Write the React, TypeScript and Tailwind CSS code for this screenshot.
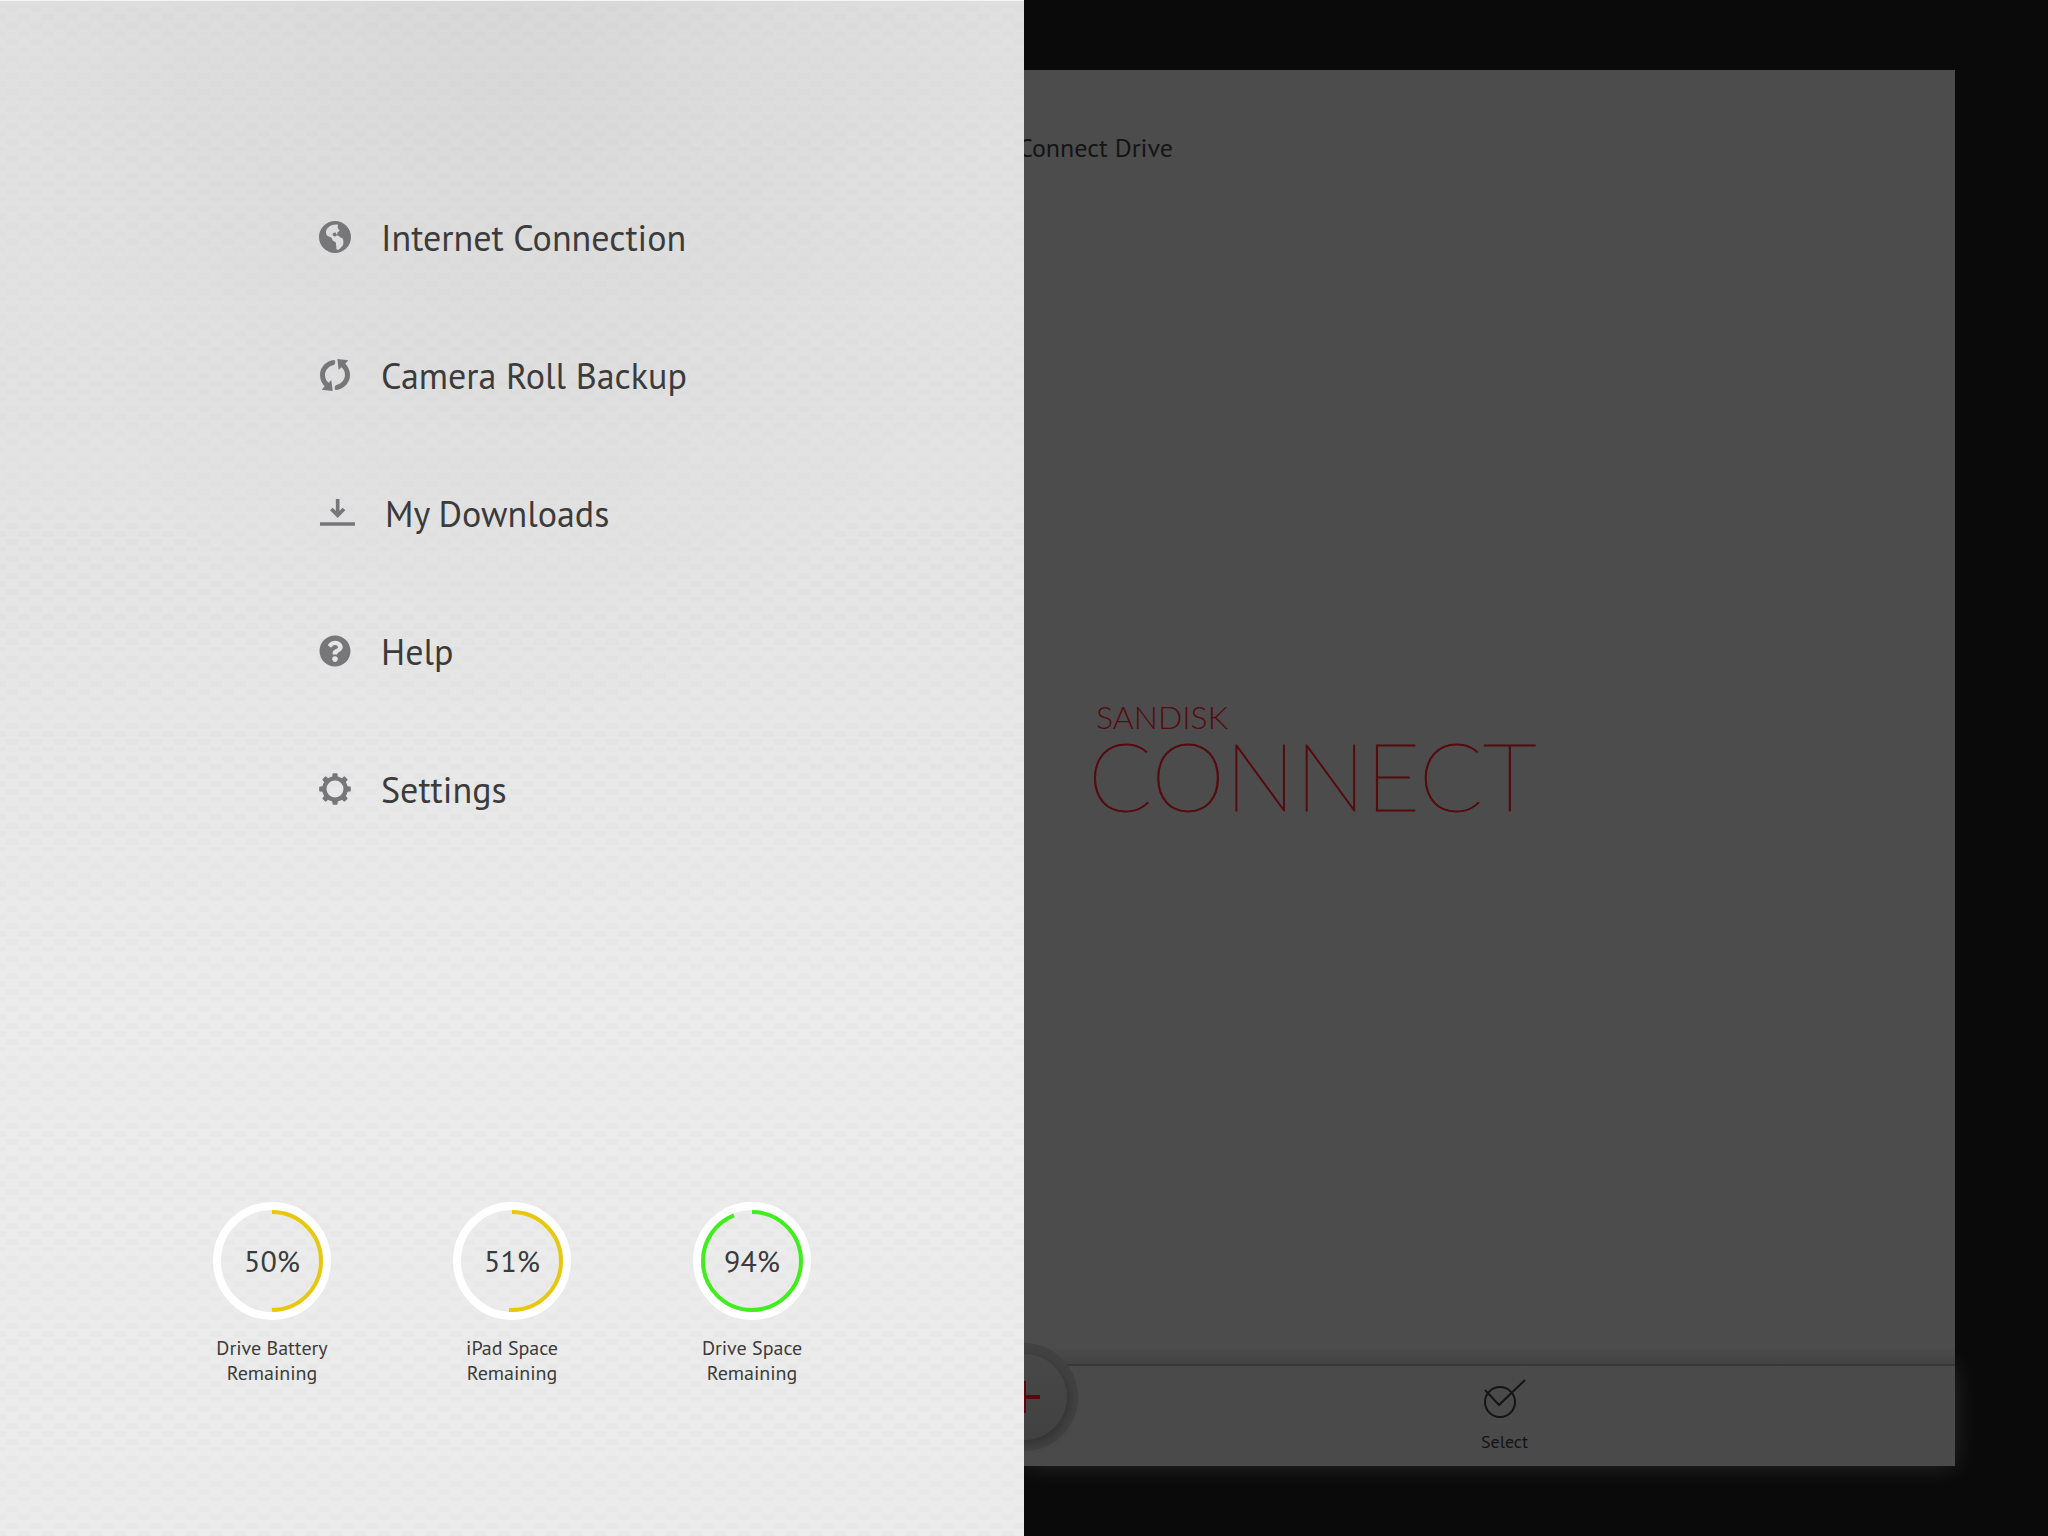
import type { ReactNode } from 'react';
import { FaQuestionCircle } from 'react-icons/fa';

interface MenuEntry {
  label: string;
  icon: ReactNode;
}

interface Gauge {
  percent: number;
  label: string;
  color: string;
}

const MENU: MenuEntry[] = [
  { label: 'Internet Connection', icon: <GlobeIcon /> },
  { label: 'Camera Roll Backup', icon: <SyncIcon /> },
  { label: 'My Downloads', icon: <DownloadIcon /> },
  { label: 'Help', icon: <FaQuestionCircle className="size-8" aria-hidden="true" /> },
  { label: 'Settings', icon: <GearIcon /> },
];

const GAUGES: Gauge[] = [
  { percent: 50, label: 'Drive Battery Remaining', color: '#e8c80f' },
  { percent: 51, label: 'iPad Space Remaining', color: '#e8c80f' },
  { percent: 94, label: 'Drive Space Remaining', color: '#3fee1c' },
];

export default function App() {
  return (
    <div className="flex min-h-screen bg-[#0a0a0a] font-['PT_Sans','Noto_Sans',sans-serif]">
      <SideMenu />
      <DriveScreen />
    </div>
  );
}

function SideMenu() {
  return (
    <aside className="relative z-10 flex w-1/2 flex-col justify-between border-t border-[#f4f4f4] bg-[#ebebeb] pt-[167px] pb-[150px]">
      <PanelTexture />
      <nav className="relative pl-[319px]">
        <ul>
          {MENU.map((entry) => (
            <li key={entry.label} className="flex h-[138px] items-center">
              <a
                href="#"
                className="flex items-center gap-[30px] text-[36px] leading-10 whitespace-nowrap text-[#3b3b3b]"
              >
                <span className="text-[#77777a]">{entry.icon}</span>
                <span className="pt-0.5">{entry.label}</span>
              </a>
            </li>
          ))}
        </ul>
      </nav>

      <div className="relative flex justify-center">
        {GAUGES.map((gauge) => (
          <UsageGauge key={gauge.label} {...gauge} />
        ))}
      </div>
    </aside>
  );
}

function PanelTexture() {
  return (
    <svg className="absolute inset-0 size-full" aria-hidden="true">
      <defs>
        <pattern id="weave" width="48" height="50" patternUnits="userSpaceOnUse">
          <path
            d="M6 5h12v6h-12zM30 5h12v6h-12zM6 22h12v6h-12zM30 22h12v6h-12zM6 38h12v6h-12zM30 38h12v6h-12zM0 13h6v6h-6zM18 13h12v6h-12zM42 13h6v6h-6zM0 30h6v6h-6zM18 30h12v6h-12zM42 30h6v6h-6zM0 46h6v4h-6zM18 46h12v4h-12zM42 46h6v4h-6z"
            fill="#000"
            opacity="0.014"
          />
        </pattern>
        <linearGradient id="shade" x1="0" y1="0" x2="0" y2="1">
          <stop offset="0" stopColor="#000" stopOpacity="0.05" />
          <stop offset="0.3" stopColor="#000" stopOpacity="0.035" />
          <stop offset="0.65" stopColor="#000" stopOpacity="0" />
        </linearGradient>
        <radialGradient id="top-shade" cx="0.5" cy="0" r="0.5">
          <stop offset="0" stopColor="#000" stopOpacity="0.035" />
          <stop offset="1" stopColor="#000" stopOpacity="0" />
        </radialGradient>
      </defs>
      <rect width="100%" height="100%" fill="url(#shade)" />
      <rect width="100%" height="100%" fill="url(#top-shade)" />
      <rect width="100%" height="100%" fill="url(#weave)" opacity="0.7" />
    </svg>
  );
}

function UsageGauge({ percent, label, color }: Gauge) {
  return (
    <div className="flex w-60 flex-col items-center gap-4">
      <div className="grid size-[118px] place-items-center">
        <svg viewBox="0 0 118 118" className="col-start-1 row-start-1 size-full" fill="none" aria-hidden="true">
          <circle cx="59" cy="59" r="55" stroke="#fff" strokeWidth="8" />
          <circle
            cx="59"
            cy="59"
            r="49"
            stroke={color}
            strokeWidth="4"
            pathLength="100"
            strokeDasharray={`${percent} 100`}
            transform="rotate(-90 59 59)"
          />
        </svg>
        <span className="col-start-1 row-start-1 pb-0.5 text-[30px] text-[#3b3b3b]">{percent}%</span>
      </div>
      <p className="w-32 text-center text-[20px] leading-[25px] text-[#3b3b3b]">{label}</p>
    </div>
  );
}

function DriveScreen() {
  return (
    <div className="w-1/2 overflow-hidden py-[70px] pr-[93px]">
      <main className="flex h-full flex-col bg-[#4c4c4c]">
        <h1 className="-ml-[6px] pt-[60px] text-[26px] leading-9 text-[#141414]">Connect Drive</h1>

        <div className="flex flex-1 flex-col justify-center pt-3 pl-16 font-['Lato',sans-serif] text-[#560a0f]">
          <p className="pl-2 text-[32px] leading-8 font-light">SANDISK</p>
          <p className="text-[94px] leading-[84px] font-extralight [-webkit-text-stroke:1px_#560a0f]">CONNECT</p>
        </div>

        <div className="relative z-10 h-6 bg-linear-to-b from-[#4c4c4c] from-30% to-[#434343]" />
        <footer className="relative z-20 flex h-[102px] justify-center border-t-2 border-[#383838] bg-[#4a4a4a] pt-3 pl-[30px]">
          <button
            type="button"
            aria-label="Add"
            className="absolute -top-[23px] -left-[54px] flex size-[108px] items-center justify-center rounded-full bg-[#424242]"
          >
            <span className="flex size-[86px] items-center justify-center rounded-full bg-linear-to-b from-[#484848] to-[#414141] shadow-[2px_4px_8px_#333]">
              <svg viewBox="0 0 32 32" className="size-8" stroke="#560a0f" strokeWidth="4" aria-hidden="true">
                <path d="M16 0v32M0 16h32" />
              </svg>
            </span>
          </button>
          <button type="button" className="flex flex-col items-center gap-3 self-start text-[18px] leading-6 text-[#141414]">
            <SelectIcon />
            Select
          </button>
        </footer>
        <div className="-mt-[100px] h-[100px] shadow-[0_0_24px_#ffffff20]" />
      </main>
    </div>
  );
}

function GlobeIcon() {
  return (
    <svg viewBox="0 0 96 96" className="size-8" fill="currentColor" fillRule="evenodd" aria-hidden="true">
      <path d="M48 0a48 48 0 1 1 0 96a48 48 0 0 1 0-96Z M57 11C44 10 33 13 26 21C21 27 19 35 23 42C26 47 33 46 37 50C40 53 39 57 43 60C47 63 51 62 51 67C50 72 53 75 52 81C52 85 54 87 58 86C64 84 66 79 70 75C74 71 73 65 73 59C73 53 68 50 63 49C60 44 55 42 51 45C47 48 43 46 41 42C40 38 42 36 46 35C50 34 51 36 52 40C54 41 56 39 55 35C55 32 60 32 62 29C62 26 57 25 56 20Z" />
    </svg>
  );
}

function SyncIcon() {
  return (
    <svg viewBox="0 0 96 96" className="size-8" fill="currentColor" aria-hidden="true">
      <path id="sync-half" d="M45 3C22 5 3 24 3 48C3 62 9 74 17 82L8 92L41 96L37 63L29 71C22 66 18 58 18 48C18 34 29 22 42 19C51 17 50 3 45 3Z" />
      <use href="#sync-half" transform="rotate(180 48 48)" />
    </svg>
  );
}

function DownloadIcon() {
  return (
    <svg viewBox="-3 0 108 96" className="h-8 w-9" fill="none" stroke="currentColor" strokeWidth="11" aria-hidden="true">
      <path d="M53 6v46M34 36l19 19l19-19M0 81h105" />
    </svg>
  );
}

function GearIcon() {
  const teeth = [0, 45, 90, 135, 180, 225, 270, 315];
  return (
    <svg viewBox="0 0 96 96" className="size-8" fill="none" stroke="currentColor" aria-hidden="true">
      <circle cx="48" cy="48" r="32" strokeWidth="13" />
      {teeth.map((angle) => (
        <path key={angle} d="M42 12L43 3H53L54 12Z" strokeWidth="5" strokeLinejoin="round" fill="currentColor" transform={`rotate(${angle} 48 48)`} />
      ))}
    </svg>
  );
}

function SelectIcon() {
  return (
    <svg viewBox="0 0 42 40" className="h-10 w-[42px]" fill="none" stroke="currentColor" strokeWidth="2" aria-hidden="true">
      <circle cx="16" cy="24" r="15" />
      <path d="M1 12L15 27L41 2" />
    </svg>
  );
}
